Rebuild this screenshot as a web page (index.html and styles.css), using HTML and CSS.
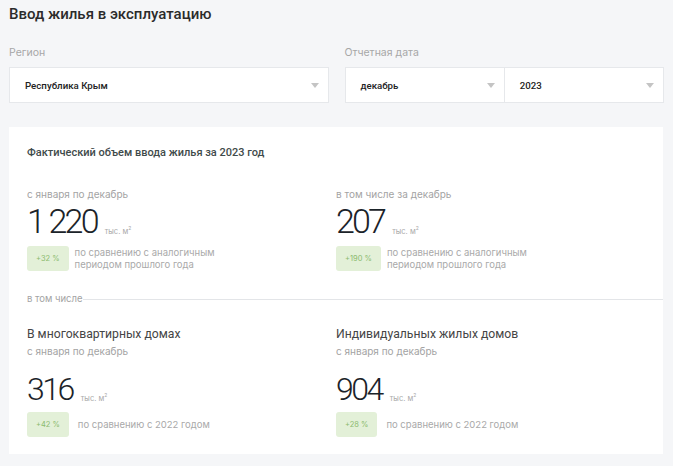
FILE: index.html
```html
<!DOCTYPE html>
<html lang="ru">
<head>
<meta charset="utf-8">
<title>Ввод жилья в эксплуатацию</title>
<link rel="stylesheet" href="styles.css">
</head>
<body>
<div class="page">
  <h1 class="title">Ввод жилья в эксплуатацию</h1>
  <div class="filters">
    <div class="field">
      <div class="label">Регион</div>
      <div class="selects">
        <div class="select">
          <span>Республика Крым</span>
          <span class="arrow"></span>
        </div>
      </div>
    </div>
    <div class="field">
      <div class="label">Отчетная дата</div>
      <div class="selects">
        <div class="select">
          <span>декабрь</span>
          <span class="arrow"></span>
        </div>
        <div class="select">
          <span>2023</span>
          <span class="arrow"></span>
        </div>
      </div>
    </div>
  </div>

  <div class="card">
    <div class="card-title">Фактический объем ввода жилья за 2023 год</div>
    <div class="row">
      <div class="stat">
        <div class="sub">с января по декабрь</div>
        <div class="value"><span class="num">1 220</span><span class="unit">тыс. м<sup>2</sup></span></div>
        <div class="compare">
          <span class="badge">+32 %</span>
          <span class="note">по сравнению с аналогичным<br>периодом прошлого года</span>
        </div>
      </div>
      <div class="stat">
        <div class="sub">в том числе за декабрь</div>
        <div class="value"><span class="num">207</span><span class="unit">тыс. м<sup>2</sup></span></div>
        <div class="compare">
          <span class="badge">+190 %</span>
          <span class="note">по сравнению с аналогичным<br>периодом прошлого года</span>
        </div>
      </div>
    </div>

    <div class="divider"><span>в том числе</span></div>

    <div class="row">
      <div class="stat">
        <div class="kind">В многоквартирных домах</div>
        <div class="sub">с января по декабрь</div>
        <div class="value small"><span class="num">316</span><span class="unit">тыс. м<sup>2</sup></span></div>
        <div class="compare short">
          <span class="badge">+42 %</span>
          <span class="note wide">по сравнению с 2022 годом</span>
        </div>
      </div>
      <div class="stat">
        <div class="kind">Индивидуальных жилых домов</div>
        <div class="sub">с января по декабрь</div>
        <div class="value small"><span class="num">904</span><span class="unit">тыс. м<sup>2</sup></span></div>
        <div class="compare short">
          <span class="badge">+28 %</span>
          <span class="note wide">по сравнению с 2022 годом</span>
        </div>
      </div>
    </div>
  </div>
</div>
</body>
</html>
```
FILE: styles.css
```css
* { box-sizing: border-box; }
html, body {
  margin: 0;
  padding: 0;
  background: #f5f6f8;
  font-family: Inter, Roboto, "Liberation Sans", sans-serif;
  color: #222;
}
.page {
  padding: 4px 9px 0 9px;
}
.title {
  margin: 0;
  font-family: Roboto, sans-serif;
  font-size: 15px;
  font-weight: 500;
  line-height: 20px;
  color: #2b2b2b;
}
.filters {
  display: grid;
  grid-template-columns: 1fr 1fr;
  gap: 16px;
  margin-top: 22px;
}
.label {
  font-size: 10.5px;
  line-height: 14px;
  color: #a7a7a7;
  margin-bottom: 7px;
}
.selects {
  display: flex;
  background: #fff;
  border: 1px solid #e6e8eb;
  height: 36px;
}
.select {
  flex: 1;
  display: flex;
  align-items: center;
  justify-content: space-between;
  padding: 0 9px 0 15px;
  font-family: Roboto, sans-serif;
  font-size: 9.7px;
  font-weight: 500;
  color: #222;
}
.select + .select {
  border-left: 1px solid #e6e8eb;
}
.arrow {
  width: 0;
  height: 0;
  border-left: 4px solid transparent;
  border-right: 4px solid transparent;
  border-top: 5px solid #c4c4c4;
}
.card {
  margin-top: 24px;
  width: 654px;
  background: #fff;
  padding: 18px 18px 17px 18px;
}
.card-title {
  font-family: Roboto, sans-serif;
  font-size: 11px;
  font-weight: 500;
  line-height: 16px;
  color: #3f4b4b;
}
.row {
  display: grid;
  grid-template-columns: 1fr 1fr;
}
.card-title + .row { margin-top: 26px; }
.sub {
  font-size: 10px;
  line-height: 14px;
  color: #a3a3a3;
}
.value {
  display: flex;
  align-items: baseline;
  margin-top: 2px;
  height: 36px;
}
.num {
  font-family: Roboto, sans-serif;
  font-weight: 300;
  font-size: 34px;
  line-height: 36px;
  letter-spacing: -2.8px;
  color: #1b2329;
}
.value.small .num { font-size: 32px; letter-spacing: -2.5px; }
.unit {
  margin-left: 8px;
  font-size: 7.5px;
  color: #a9a9a9;
}
.unit sup {
  font-size: 5px;
}
.compare {
  display: flex;
  align-items: center;
  margin-top: 7px;
}
.compare.short { margin-top: 5px; }
.badge {
  height: 25px;
  padding: 0 9px;
  border-radius: 3px;
  background: #e3f0d8;
  color: #8cbb6f;
  font-size: 7.5px;
  display: flex;
  align-items: center;
  justify-content: center;
  flex: none;
}
.note {
  margin-left: 6px;
  font-size: 9.5px;
  line-height: 12px;
  color: #a9a9a9;
}
.note.wide { margin-left: 9px; }
.divider {
  display: flex;
  align-items: center;
  margin: 21px -18px 0 0;
  font-size: 9.5px;
  color: #a3a3a3;
  line-height: 14px;
}
.divider::after {
  content: "";
  flex: 1;
  height: 1px;
  background: #e3e5e8;
}
.kind {
  margin-top: 19px;
  font-family: Roboto, sans-serif;
  font-size: 12.2px;
  font-weight: 400;
  line-height: 18px;
  color: #454545;
}
.kind + .sub { margin-top: 1px; }
.value.small { margin-top: 13px; }
```
